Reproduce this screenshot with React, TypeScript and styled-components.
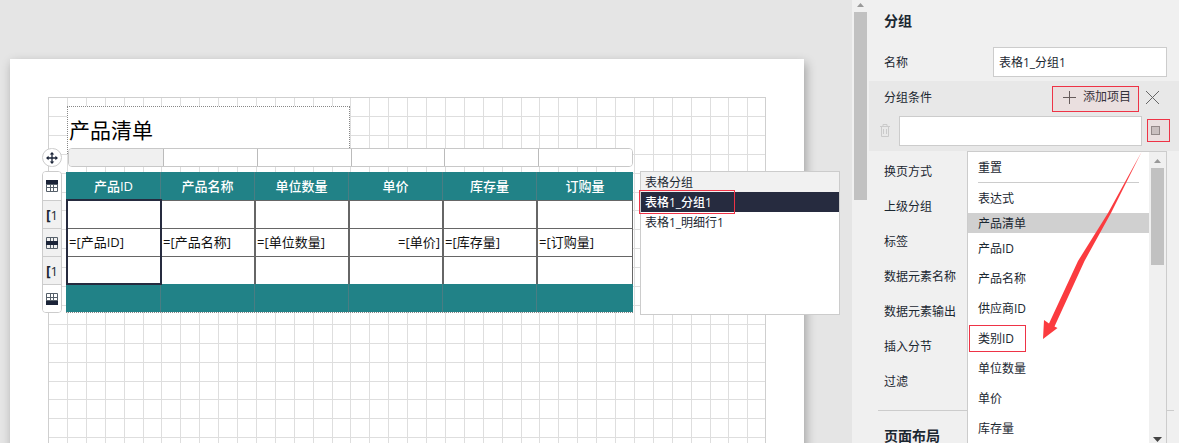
import React from "react";
import styled, { createGlobalStyle, css } from "styled-components";

const teal = "#218287";
const navy = "#262b3f";
const red = "#ee3346";
const ink = "#1b2731";

const GlobalStyle = createGlobalStyle`
  * { box-sizing: border-box; }
  body { margin: 0; background: #e5e5e5; overflow: hidden; }
  body, button, input {
    font-family: "Open Sans", "Noto Sans CJK SC", sans-serif;
    font-size: 12px;
    color: ${ink};
  }
  button { border: 0; padding: 0; background: none; text-align: left; }
  ul { list-style: none; margin: 0; padding: 0; }
`;

const Shell = styled.div`
  display: grid;
  grid-template-columns: minmax(0, 1fr) 17px 310px;
  height: 100vh;
  overflow: hidden;
`;

const Canvas = styled.main`
  display: flex;
  padding: 59px 48px 0 10px;
  background: #e5e5e5;
`;

const Page = styled.section`
  flex: 1;
  min-width: 0;
  display: flex;
  padding: 38px 38px 0;
  background: #fff;
  box-shadow: 2px 4px 10px rgba(0, 0, 0, 0.3);
`;

const Body = styled.div`
  position: relative;
  flex: 1;
  min-width: 0;
  padding: 8px 0 0;
  border: 1px solid #cfcfcf;
  border-bottom: 0;
`;

const GridPaper = styled.svg`
  position: absolute;
  inset: 0;
  width: 100%;
  height: 100%;
`;

const TitleBox = styled.h1`
  position: relative;
  width: 283px;
  height: 48px;
  margin: 0 0 -6px 18px;
  padding-left: 1px;
  border: 1px dotted #888;
  background: #fff;
  color: #000;
  font-size: 21px;
  font-weight: 400;
  line-height: 46px;
`;

const Designer = styled.div`
  position: relative;
  display: grid;
  grid-template-columns: 20px 567px 200px;
  column-gap: 4px;
  row-gap: 5px;
  width: max-content;
  margin-left: -7px;
  align-items: start;
`;

const MoveHandle = styled.button`
  display: flex;
  align-items: center;
  justify-content: center;
  width: 20px;
  height: 19px;
  border: 1px solid #ccc;
  border-radius: 10px;
  background: #fff;
`;

const ColumnStrip = styled.div`
  display: grid;
  grid-template-columns: repeat(6, 1fr);
  height: 19px;
  margin-left: 2px;
  border: 1px solid #c8c8c8;
  border-radius: 4px;
  background: #fff;
  overflow: hidden;
`;

const ColumnHandle = styled.div<{ $active?: boolean }>`
  background: ${(p) => (p.$active ? "#f0f0f0" : "#fff")};
  & + & { border-left: 1px solid #bbb; }
`;

const RowHandles = styled.div`
  grid-column: 1;
  margin-top: -1px;
  border: 1px solid #ccc;
  border-radius: 4px;
  overflow: hidden;
`;

const RowHandle = styled.button<{ $shaded?: boolean }>`
  display: flex;
  align-items: center;
  justify-content: center;
  width: 100%;
  height: 28px;
  background: ${(p) => (p.$shaded ? "#f1f1f1" : "#fff")};
  font-size: 13px;
  & + & { border-top: 1px solid #ccc; }
  b { font-size: 14px; }
`;

const TableFrame = styled.div`
  position: relative;
  border-bottom: 1px dotted #888;
`;

const Selection = styled.div`
  position: absolute;
  left: 0;
  top: 27px;
  width: 96px;
  height: 86px;
  border: 2px solid ${navy};
  pointer-events: none;
`;

const ReportTable = styled.table`
  width: 100%;
  table-layout: fixed;
  border-spacing: 0;
  font-size: 13px;
  color: #111;
`;

const Cell = styled.td<{ $right?: boolean }>`
  height: 28px;
  padding: 0 2px 2px 1px;
  background: #fff;
  border-left: 2px solid #666;
  border-top: 1px solid #666;
  text-align: ${(p) => (p.$right ? "right" : "left")};
  line-height: 18px;
  white-space: nowrap;
  &:last-child { border-right: 1px solid #666; }
`;

const BandCell = styled.th`
  height: 28px;
  padding: 0;
  background: ${teal};
  border-left: 1px solid #4a7d83;
  color: #fff;
  font-weight: 500;
  line-height: 18px;
  &:first-child { border-left-color: ${teal}; }
`;

const GroupPanel = styled.section`
  margin: -1px -3px 0 3px;
  height: 144px;
  border: 1px solid #ccc;
  background: #fff;
`;

const GroupTitle = styled.div`
  height: 20px;
  padding-left: 4px;
  background: #f1f1f1;
  line-height: 22px;
`;

const GroupItem = styled.button<{ $selected?: boolean }>`
  position: relative;
  display: block;
  width: 100%;
  height: 20px;
  padding-left: 4px;
  line-height: 21px;
  ${(p) => p.$selected && css`background: ${navy}; color: #fff; font-weight: 500;`}
`;

const Mark = styled.span<{ $inset: string; $tint?: boolean }>`
  position: absolute;
  inset: ${(p) => p.$inset};
  border: 1px solid ${red};
  background: ${(p) => (p.$tint ? "rgba(255, 150, 150, 0.1)" : "none")};
  pointer-events: none;
`;

const ScrollTrack = styled.div`
  display: flex;
  flex-direction: column;
  align-items: center;
  background: #f0f0f0;
`;

const ScrollArrow = styled.svg`
  display: block;
  width: 9px;
  height: 12px;
  flex: none;
`;

const ScrollThumb = styled.div<{ $length: number }>`
  width: 13px;
  height: ${(p) => p.$length}px;
  background: #c1c1c1;
`;

const Properties = styled.aside`
  background: #f0f0f0;
`;

const SectionTitle = styled.h2`
  margin: 0;
  padding-left: 15px;
  font-size: 14px;
  font-weight: 700;
  line-height: 42px;
`;

const NameRow = styled.div`
  display: flex;
  align-items: center;
  height: 39px;
  padding: 0 12px 0 15px;
  label { flex: 1; }
`;

const TextInput = styled.input<{ $wide?: boolean }>`
  height: 30px;
  padding: 0 5px;
  border: 1px solid #ccc;
  border-radius: 0;
  background: #fff;
  outline: 0;
  ${(p) => (p.$wide ? css`flex: 1; min-width: 0;` : css`width: 174px;`)}
`;

const Conditions = styled.div`
  position: relative;
  height: 70px;
  background: #e8e8e8;
`;

const ConditionHeader = styled.div`
  display: flex;
  align-items: center;
  height: 32px;
  padding: 0 20px 0 15px;
  label { flex: 1; }
`;

const AddButton = styled.button`
  position: relative;
  display: flex;
  align-items: center;
  gap: 7px;
  margin-right: 15px;
  line-height: 20px;
`;

const IconButton = styled.button`
  position: relative;
  display: flex;
  align-items: center;
  justify-content: center;
`;

const ConditionRow = styled.div`
  display: flex;
  align-items: center;
  gap: 9px;
  height: 35px;
  padding: 0 19px 0 11px;
`;

const Square = styled.span`
  width: 9px;
  height: 9px;
  border: 1px solid #888;
  background: #c4c4c4;
`;

const PropertyList = styled.ul`
  padding: 3px 0 11px 15px;
  li { height: 35px; line-height: 35px; }
`;

const Divider = styled.hr`
  margin: 0 5px 4px 9px;
  border: 0;
  border-top: 1px solid #ccc;
`;

const Menu = styled.div`
  position: absolute;
  top: 100%;
  left: 98px;
  right: 12px;
  height: 298px;
  display: grid;
  grid-template-columns: 1fr 17px;
  border: 1px solid #ccc;
  background: #fff;
`;

const MenuItem = styled.button<{ $kind?: "heading" }>`
  position: relative;
  display: block;
  width: 100%;
  height: 30px;
  padding-left: 10px;
  line-height: 32px;
  ${(p) => p.$kind === "heading" && css`height: 20px; line-height: 22px; background: #d0d0d0;`}
`;

const MenuDivider = styled.hr`
  margin: 0 10px;
  border: 0;
  border-top: 1px solid #ccc;
`;

const MenuScroll = styled(ScrollTrack)`
  justify-content: space-between;
  padding: 4px 0;
`;

const MenuScrollTop = styled.div`
  display: flex;
  flex-direction: column;
  align-items: center;
`;

const Arrow = styled.svg`
  position: absolute;
  left: 75px;
  top: 0;
  width: 100px;
  height: 188px;
  pointer-events: none;
`;

const TableIcon = ({ band }: { band: "top" | "middle" | "bottom" }) => {
  const y = { top: 0, middle: 4, bottom: 8 }[band];
  return (
    <svg width="12" height="12" viewBox="0 0 12 12" aria-hidden="true">
      <path d="M.5.5h11v11H.5zM4.5 0v12M7.5 0v12M0 4.5h12M0 7.5h12" fill="none" stroke="#56606a" />
      <rect y={y} width="12" height="4" fill="#1b2438" />
    </svg>
  );
};

const columns = ["产品ID", "产品名称", "单位数量", "单价", "库存量", "订购量"];
const widths = [94, 94, 94, 94, 94, 97];
const properties = ["换页方式", "上级分组", "标签", "数据元素名称", "数据元素输出", "插入分节", "过滤"];
const fields = ["产品ID", "产品名称", "供应商ID", "类别ID", "单位数量", "单价", "库存量"];
const gridLines = [19, 38, 57, 76, 95, 113, 132, 151, 170, 189];

export default function App() {
  return (
    <Shell>
      <GlobalStyle />
      <Canvas>
        <Page>
          <Body>
            <GridPaper aria-hidden="true">
              <defs>
                <pattern id="grid" width="189" height="189" patternUnits="userSpaceOnUse">
                  {gridLines.map((n) => (
                    <path key={n} d={`M${n - 1} 0h1v189h-1zM0 ${n - 1}h189v1H0z`} fill="#dedede" />
                  ))}
                </pattern>
              </defs>
              <rect width="100%" height="100%" fill="url(#grid)" />
            </GridPaper>
            <TitleBox>产品清单</TitleBox>
            <Designer>
              <MoveHandle aria-label="移动">
                <svg width="12" height="12" viewBox="0 0 12 12" aria-hidden="true">
                  <path d="M6 1v10M1 6h10" stroke="#1b2438" strokeWidth="1.3" />
                  <path d="M6 0l2.3 2.6H3.7zM6 12l2.3-2.6H3.7zM0 6l2.6-2.3v4.6zM12 6L9.4 3.7v4.6z" fill="#1b2438" />
                </svg>
              </MoveHandle>
              <ColumnStrip>
                {columns.map((c, i) => <ColumnHandle key={c} $active={i === 0} />)}
              </ColumnStrip>
              <RowHandles>
                <RowHandle aria-label="表头"><TableIcon band="top" /></RowHandle>
                <RowHandle $shaded><b>[</b>1</RowHandle>
                <RowHandle $shaded aria-label="明细"><TableIcon band="middle" /></RowHandle>
                <RowHandle $shaded><b>[</b>1</RowHandle>
                <RowHandle aria-label="表尾"><TableIcon band="bottom" /></RowHandle>
              </RowHandles>
              <TableFrame>
                <ReportTable>
                  <colgroup>{widths.map((w, i) => <col key={i} style={{ width: w }} />)}</colgroup>
                  <thead>
                    <tr>{columns.map((c) => <BandCell key={c}>{c}</BandCell>)}</tr>
                  </thead>
                  <tbody>
                    <tr>{columns.map((c) => <Cell key={c} />)}</tr>
                    <tr>{columns.map((c) => <Cell key={c} $right={c === "单价"}>=[{c}]</Cell>)}</tr>
                    <tr>{columns.map((c) => <Cell key={c} />)}</tr>
                  </tbody>
                  <tfoot>
                    <tr>{columns.map((c) => <BandCell as="td" key={c} />)}</tr>
                  </tfoot>
                </ReportTable>
                <Selection />
              </TableFrame>
              <GroupPanel>
                <GroupTitle>表格分组</GroupTitle>
                <GroupItem $selected>
                  表格1_分组1
                  <Mark $inset="-2px 104px -2px -2px" />
                </GroupItem>
                <GroupItem>表格1_明细行1</GroupItem>
              </GroupPanel>
            </Designer>
          </Body>
        </Page>
      </Canvas>

      <ScrollTrack>
        <ScrollArrow viewBox="0 0 9 12"><path d="M1 7l3.500-4L8 7z" fill="#999" /></ScrollArrow>
        <ScrollThumb $length={188} />
      </ScrollTrack>

      <Properties>
        <SectionTitle>分组</SectionTitle>
        <NameRow>
          <label htmlFor="name">名称</label>
          <TextInput id="name" defaultValue="表格1_分组1" />
        </NameRow>
        <Conditions>
          <ConditionHeader>
            <label htmlFor="condition">分组条件</label>
            <AddButton>
              <Mark $inset="-1px -8px -5px -11px" $tint />
              <svg width="13" height="13" viewBox="0 0 13 13" aria-hidden="true">
                <path d="M6.500 0v13M0 6.500h13" stroke="#555" />
              </svg>
              添加项目
            </AddButton>
            <IconButton aria-label="关闭">
              <svg width="13" height="13" viewBox="0 0 13 13" aria-hidden="true">
                <path d="M0 0l13 13M13 0L0 13" stroke="#666" />
              </svg>
            </IconButton>
          </ConditionHeader>
          <ConditionRow>
            <IconButton aria-label="删除">
              <svg width="10" height="13" viewBox="0 0 10 13" aria-hidden="true">
                <path d="M0 2.500h10M3 2V.5h4V2M1.500 3v9.500h7V3M3.500 5v5M6.500 5v5" fill="none" stroke="#cacaca" />
              </svg>
            </IconButton>
            <TextInput id="condition" $wide />
            <IconButton aria-label="选项">
              <Mark $inset="-7px -10px -7px -4px" $tint />
              <Square />
            </IconButton>
          </ConditionRow>
          <Menu>
            <div>
              <MenuItem>重置</MenuItem>
              <MenuDivider />
              <MenuItem>表达式</MenuItem>
              <MenuItem as="div" $kind="heading">产品清单</MenuItem>
              {fields.map((f) => (
                <MenuItem key={f}>
                  {f}
                  {f === "类别ID" && <Mark $inset="2px 123px 1px 1px" />}
                </MenuItem>
              ))}
            </div>
            <MenuScroll>
              <MenuScrollTop>
                <ScrollArrow viewBox="0 0 9 12"><path d="M1 7l3.500-4L8 7z" fill="#999" /></ScrollArrow>
                <ScrollThumb $length={97} />
              </MenuScrollTop>
              <ScrollArrow viewBox="0 0 9 12"><path d="M0 5h9l-4.500 5z" fill="#444" /></ScrollArrow>
            </MenuScroll>
            <Arrow viewBox="0 0 100 188" aria-hidden="true">
              <path d="M98.500 0L65 61 35 109 6 171.500 1 168 0 187l14.500-11-3-1.500L41.500 109 68 61z" fill="#fb3b3f" />
            </Arrow>
          </Menu>
        </Conditions>
        <PropertyList>
          {properties.map((p) => <li key={p}>{p}</li>)}
        </PropertyList>
        <Divider />
        <SectionTitle>页面布局</SectionTitle>
      </Properties>
    </Shell>
  );
}
